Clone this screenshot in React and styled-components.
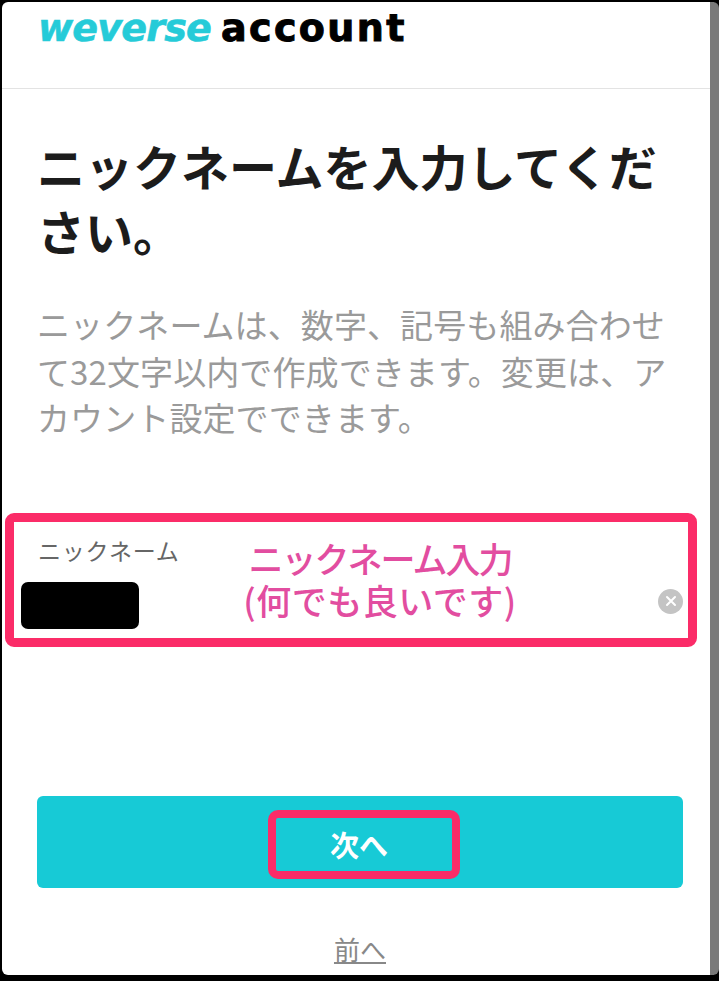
import React from "react";
import styled, { createGlobalStyle } from "styled-components";

const GlobalStyle = createGlobalStyle`
  html, body {
    margin: 0;
    padding: 0;
    background: #000;
  }
  body {
    font-family: "Noto Sans CJK JP", "Noto Sans", sans-serif;
  }
`;

const App = () => {
  return (
    <Screen>
      <GlobalStyle />
      <Frame>
        <Header>
          <LogoMark>weverse</LogoMark>
          <LogoWord>account</LogoWord>
        </Header>
        <Main>
          <Title>ニックネームを入力してください。</Title>
          <Description>
            ニックネームは、数字、記号も組み合わせて32文字以内で作成できます。変更は、アカウント設定でできます。
          </Description>
          <Field>
            <FieldLabel>ニックネーム</FieldLabel>
            <MaskedValue />
            <Annotation>
              <AnnotationLine $spacing="-2px">ニックネーム入力</AnnotationLine>
              <AnnotationLine $spacing="0.5px">(何でも良いです)</AnnotationLine>
            </Annotation>
            <ClearButton>
              <svg width="14" height="14" viewBox="0 0 14 14">
                <path
                  d="M3 3l8 8M11 3l-8 8"
                  stroke="#fff"
                  strokeWidth="2"
                  strokeLinecap="round"
                />
              </svg>
            </ClearButton>
          </Field>
          <NextButton>
            <NextHighlight>次へ</NextHighlight>
          </NextButton>
          <BackLink>前へ</BackLink>
        </Main>
      </Frame>
    </Screen>
  );
};

export default App;

const Screen = styled.div`
  width: 719px;
  height: 981px;
  box-sizing: border-box;
  padding: 2px 0 6px 2px;
  background: #000;
  overflow: hidden;
`;

const Frame = styled.div`
  height: 100%;
  background: #fff;
  border-radius: 6px;
  border-right: 9px solid #7a7a7a;
  display: flex;
  flex-direction: column;
  box-sizing: border-box;
`;

const Header = styled.div`
  height: 87px;
  flex: none;
  box-sizing: border-box;
  border-bottom: 1px solid #e3e3e3;
  padding: 4px 0 0 36px;
  display: flex;
  align-items: flex-start;
  gap: 10px;
`;

const LogoMark = styled.span`
  font-family: "DejaVu Sans", sans-serif;
  font-style: italic;
  font-weight: 700;
  font-size: 38px;
  line-height: 44px;
  letter-spacing: -0.8px;
  color: #25cbd8;
  -webkit-text-stroke: 0.6px #25cbd8;
`;

const LogoWord = styled.span`
  font-family: "DejaVu Sans", sans-serif;
  font-weight: 700;
  font-size: 38px;
  line-height: 44px;
  letter-spacing: 2.4px;
  color: #000;
  -webkit-text-stroke: 1px #000;
`;

const Main = styled.div`
  flex: 1;
  display: flex;
  flex-direction: column;
  min-height: 0;
`;

const Title = styled.h1`
  margin: 44px 24px 0 35px;
  font-size: 48px;
  line-height: 65px;
  font-weight: 700;
  color: #1c1c1c;
`;

const Description = styled.p`
  margin: 38px 32px 0 35px;
  font-size: 33px;
  line-height: 46.5px;
  letter-spacing: 0.1px;
  font-weight: 400;
  color: #9a9a9a;
`;

const Field = styled.div`
  position: relative;
  height: 134px;
  box-sizing: border-box;
  margin: 72px 13px 0 3px;
  padding: 13px 0 0 16px;
  border: 9px solid #fb2c68;
  border-radius: 9px;
`;

const FieldLabel = styled.div`
  margin-left: 8px;
  font-size: 23px;
  line-height: 30px;
  letter-spacing: 0.7px;
  color: #666;
`;

const MaskedValue = styled.div`
  width: 118px;
  height: 47px;
  margin: 17px 0 0 -9px;
  background: #000;
  border-radius: 7px;
`;

const Annotation = styled.div`
  position: absolute;
  left: 226px;
  top: 15px;
  width: 280px;
  font-size: 35px;
  line-height: 42px;
  font-weight: 500;
  color: #e24da0;
  text-align: center;
`;

const AnnotationLine = styled.div`
  letter-spacing: ${(props) => props.$spacing};
  white-space: nowrap;
`;

const ClearButton = styled.div`
  position: absolute;
  right: 5px;
  top: 67px;
  width: 25px;
  height: 25px;
  border-radius: 50%;
  background: #c4c4c4;
  display: flex;
  align-items: center;
  justify-content: center;
`;

const NextButton = styled.div`
  height: 92px;
  margin: 149px 27px 0 35px;
  flex: none;
  background: #17cad6;
  border-radius: 6px;
  display: flex;
  align-items: center;
  justify-content: center;
`;

const NextHighlight = styled.div`
  width: 192px;
  height: 69px;
  box-sizing: border-box;
  margin: 5px 0 0 8px;
  padding-right: 10px;
  border: 8px solid #fb2c68;
  border-radius: 10px;
  display: flex;
  align-items: center;
  justify-content: center;
  font-size: 29px;
  font-weight: 700;
  color: #fff;
`;

const BackLink = styled.a`
  align-self: center;
  margin: 42px 0 0 8px;
  font-size: 26px;
  line-height: 38px;
  color: #888;
  text-decoration: underline;
`;
